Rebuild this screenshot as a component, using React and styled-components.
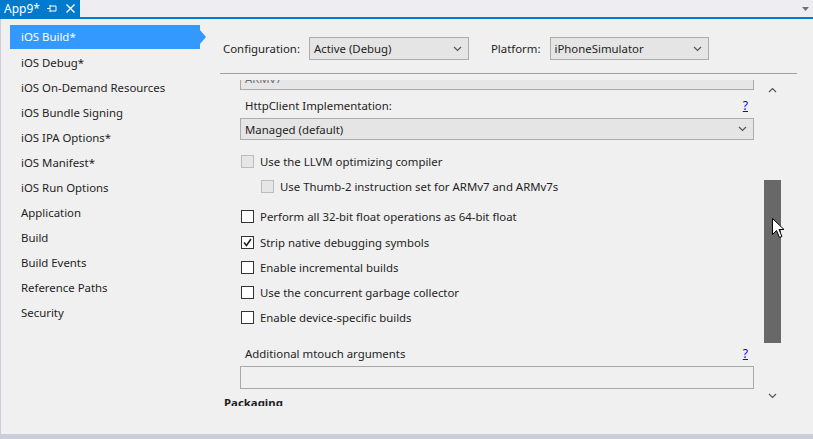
import React from 'react'
import styled, { createGlobalStyle } from 'styled-components'

const GlobalStyle = createGlobalStyle`
    html, body {
        margin: 0;
        padding: 0;
        background: #f0f0f0;
        overflow: hidden;
    }
    body {
        font-family: "Noto Sans", "Open Sans", sans-serif;
        font-size: 11.4px;
        color: #1e1e1e;
    }
`

const Window = styled.div`
    width: 813px;
    height: 439px;
    display: flex;
    flex-direction: column;
    background: #cccedb;
    position: relative;
`

const TabBar = styled.div`
    height: 17px;
    display: flex;
    align-items: stretch;
    background: #eeeef2;
    border-bottom: 2px solid #007acc;
`

const Tab = styled.div`
    width: 80px;
    background: #007acc;
    color: #fff;
    display: flex;
    align-items: center;
    padding-left: 4px;
    box-sizing: border-box;
    font-size: 12px;
    line-height: 17px;
`

const TabTitle = styled.span`
    flex: 1;
`

const TabIcon = styled.span`
    display: flex;
    align-items: center;
    margin-right: ${p => p.$gap}px;
`

const TabSpacer = styled.div`
    flex: 1;
`

const TabMenu = styled.div`
    width: 16px;
    display: flex;
    align-items: center;
    justify-content: center;
`

const Body = styled.div`
    flex: 1;
    display: flex;
    margin: 0 0 5px 1px;
    background: #f0f0f0;
    min-height: 0;
`

const Sidebar = styled.ul`
    list-style: none;
    margin: 0;
    padding: 6px 0 0 9px;
    width: 219px;
    box-sizing: border-box;
    flex: none;
`

const NavItem = styled.li`
    position: relative;
    padding-left: 11px;
    width: 190px;
    box-sizing: border-box;
    background: ${p => (p.$active ? '#3399ff' : 'transparent')};
    color: ${p => (p.$active ? '#fff' : '#1e1e1e')};
    height: ${p => (p.$active ? '24px' : '25px')};
    line-height: ${p => (p.$active ? '24px' : '26px')};
    margin-bottom: ${p => (p.$active ? '1px' : '0')};

    &::after {
        content: '';
        display: ${p => (p.$active ? 'block' : 'none')};
        position: absolute;
        right: -6px;
        top: 5px;
        border-top: 7px solid transparent;
        border-bottom: 7px solid transparent;
        border-left: 6px solid #3399ff;
    }
`

const Main = styled.div`
    flex: 1;
    display: flex;
    flex-direction: column;
    min-width: 0;
    padding-right: 16px;
`

const Header = styled.div`
    display: flex;
    align-items: center;
    height: 23px;
    margin-top: 18px;
    padding-left: 3px;
    padding-bottom: 13px;
    border-bottom: 1px solid #a0a0a0;
`

const HeaderLabel = styled.span`
    margin-right: ${p => p.$gap}px;
`

const Select = styled.div`
    box-sizing: border-box;
    width: ${p => p.$width};
    height: ${p => p.$height || 23}px;
    border: 1px solid #acacac;
    background: #e5e5e5;
    display: flex;
    align-items: center;
    justify-content: space-between;
    padding: 0 6px 0 4px;
    margin-right: ${p => p.$gap || 0}px;
    color: #1e1e1e;
    flex: none;
`

const Chevron = ({ up }) => (
    <svg width="9" height="6" viewBox="0 0 9 6">
        <path
            d={up ? 'M1 5 L4.5 1.5 L8 5' : 'M1 1 L4.5 4.5 L8 1'}
            fill="none"
            stroke="#555"
            strokeWidth="1.2"
        />
    </svg>
)

const ScrollArea = styled.div`
    display: flex;
    height: 326px;
    margin-top: 6px;
`

const Viewport = styled.div`
    flex: 1;
    overflow: hidden;
    padding-right: 10px;
`

const Content = styled.div`
    margin-top: -13px;
    padding-left: 20px;
    display: flex;
    flex-direction: column;
`

const TextBox = styled.div`
    box-sizing: border-box;
    height: 23px;
    border: 1px solid #a9a9a9;
    background: ${p => (p.$disabled ? '#e6e6e6' : '#f0f0f0')};
    color: #6d6d6d;
    padding-left: 4px;
    line-height: 21px;
`

const FieldLabel = styled.div`
    display: flex;
    justify-content: space-between;
    align-items: center;
    height: 16px;
    padding: 0 6px 0 5px;
    margin-top: ${p => p.$mt}px;
    margin-bottom: 5px;
`

const Help = styled.a`
    color: #0000ff;
    text-decoration: underline;
    font-size: 12px;
    cursor: pointer;
`

const CheckRow = styled.label`
    display: flex;
    align-items: center;
    height: 16px;
    margin-top: ${p => p.$mt}px;
    padding-left: ${p => (p.$indent ? 21 : 1)}px;
    color: #1e1e1e;
`

const Box = styled.span`
    box-sizing: border-box;
    width: 13px;
    height: 13px;
    border: 1px solid ${p => (p.$disabled ? '#bcbcbc' : '#333')};
    background: ${p => (p.$disabled ? '#e6e6e6' : '#fff')};
    margin-right: 6px;
    display: flex;
    align-items: center;
    justify-content: center;
    flex: none;
`

const SectionTitle = styled.div`
    font-weight: bold;
    margin-top: 6px;
    margin-left: -16px;
    height: 16px;
`

const Scrollbar = styled.div`
    width: 17px;
    margin-right: 16px;
    display: flex;
    flex-direction: column;
    align-items: center;
    flex: none;
`

const ScrollButton = styled.div`
    height: 20px;
    display: flex;
    align-items: center;
    justify-content: center;
`

const Track = styled.div`
    flex: 1;
    width: 17px;
    position: relative;
`

const Thumb = styled.div`
    position: absolute;
    left: 0;
    width: 17px;
    background: #686868;
`

const Cursor = styled.svg`
    position: absolute;
    left: 772px;
    top: 218px;
`

const navItems = [
    'iOS Build*',
    'iOS Debug*',
    'iOS On-Demand Resources',
    'iOS Bundle Signing',
    'iOS IPA Options*',
    'iOS Manifest*',
    'iOS Run Options',
    'Application',
    'Build',
    'Build Events',
    'Reference Paths',
    'Security',
]

const Check = ({ checked, disabled, indent, mt, children }) => (
    <CheckRow $indent={indent} $mt={mt}>
        <Box $disabled={disabled}>
            {checked && (
                <svg width="9" height="9" viewBox="0 0 9 9">
                    <path d="M1 4.5 L3.5 7.5 L8 1" fill="none" stroke="#1e1e1e" strokeWidth="1.6" />
                </svg>
            )}
        </Box>
        {children}
    </CheckRow>
)

const App = () => {
    return (
        <Window>
            <GlobalStyle />
            <TabBar>
                <Tab>
                    <TabTitle>App9*</TabTitle>
                    <TabIcon $gap={9}>
                        <svg width="10" height="9" viewBox="0 0 10 9">
                            <path d="M0 4.5 H3 M3 1 V8 M3 2 H9 M3 7 H9 M9 2 V7" fill="none" stroke="#fff" strokeWidth="1" />
                        </svg>
                    </TabIcon>
                    <TabIcon $gap={5}>
                        <svg width="9" height="9" viewBox="0 0 9 9">
                            <path d="M0.5 0.5 L8.5 8.5 M8.5 0.5 L0.5 8.5" stroke="#fff" strokeWidth="1.4" />
                        </svg>
                    </TabIcon>
                </Tab>
                <TabSpacer />
                <TabMenu>
                    <svg width="7" height="4" viewBox="0 0 7 4">
                        <path d="M0 0 H7 L3.5 4 Z" fill="#717171" />
                    </svg>
                </TabMenu>
            </TabBar>
            <Body>
                <Sidebar>
                    {navItems.map((item, i) => (
                        <NavItem key={item} $active={i === 0}>{item}</NavItem>
                    ))}
                </Sidebar>
                <Main>
                    <Header>
                        <HeaderLabel $gap={9}>Configuration:</HeaderLabel>
                        <Select $width="160px" $gap={22}>
                            <span>Active (Debug)</span>
                            <Chevron />
                        </Select>
                        <HeaderLabel $gap={9}>Platform:</HeaderLabel>
                        <Select $width="159px">
                            <span>iPhoneSimulator</span>
                            <Chevron />
                        </Select>
                    </Header>
                    <ScrollArea>
                        <Viewport>
                            <Content>
                                <TextBox $disabled>ARMv7</TextBox>
                                <FieldLabel $mt={7}>
                                    <span>HttpClient Implementation:</span>
                                    <Help>?</Help>
                                </FieldLabel>
                                <Select $width="100%" $height={22}>
                                    <span>Managed (default)</span>
                                    <Chevron />
                                </Select>
                                <Check disabled mt={13}>Use the LLVM optimizing compiler</Check>
                                <Check disabled indent mt={9}>Use Thumb-2 instruction set for ARMv7 and ARMv7s</Check>
                                <Check mt={14}>Perform all 32-bit float operations as 64-bit float</Check>
                                <Check checked mt={10}>Strip native debugging symbols</Check>
                                <Check mt={9}>Enable incremental builds</Check>
                                <Check mt={9}>Use the concurrent garbage collector</Check>
                                <Check mt={9}>Enable device-specific builds</Check>
                                <FieldLabel $mt={20}>
                                    <span>Additional mtouch arguments</span>
                                    <Help>?</Help>
                                </FieldLabel>
                                <TextBox />
                                <SectionTitle>Packaging</SectionTitle>
                            </Content>
                        </Viewport>
                        <Scrollbar>
                            <ScrollButton><Chevron up /></ScrollButton>
                            <Track>
                                <Thumb style={{ top: '80px', height: '163px' }} />
                            </Track>
                            <ScrollButton><Chevron /></ScrollButton>
                        </Scrollbar>
                    </ScrollArea>
                </Main>
            </Body>
            <Cursor width="13" height="21" viewBox="0 0 13 21">
                <path d="M0.5 0.5 V16.5 L4.5 12.5 L7.5 19.5 L10 18.5 L7 11.5 H12 Z" fill="#fff" stroke="#000" strokeWidth="1" />
            </Cursor>
        </Window>
    )
}

export default App
